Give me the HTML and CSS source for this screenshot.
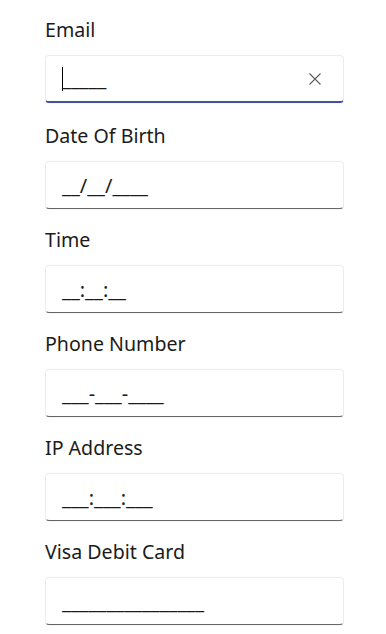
FILE: index.html
```html
<!DOCTYPE html>
<html lang="en">
<head>
  <meta charset="UTF-8">
  <meta name="viewport" content="width=device-width, initial-scale=1.0">
  <title>Masked TextBox</title>
  <link rel="stylesheet" href="styles.css">
</head>
<body>
  <div class="form-section">
    <div class="field first">
      <label>Email</label>
      <div class="mask-box focused">
        <span class="caret"></span><span class="mask">_____</span>
        <span class="clear">
          <svg width="14" height="14" viewBox="0 0 14 14">
            <path d="M1.5 1.5 L12.5 12.5 M12.5 1.5 L1.5 12.5" stroke="#5c5c5c" stroke-width="1.1" fill="none"/>
          </svg>
        </span>
      </div>
    </div>

    <div class="field">
      <label>Date Of Birth</label>
      <div class="mask-box"><span class="mask">__/__/____</span></div>
    </div>

    <div class="field">
      <label>Time</label>
      <div class="mask-box"><span class="mask">__:__:__</span></div>
    </div>

    <div class="field">
      <label>Phone Number</label>
      <div class="mask-box"><span class="mask">___-___-____</span></div>
    </div>

    <div class="field">
      <label>IP Address</label>
      <div class="mask-box"><span class="mask">___:___:___</span></div>
    </div>

    <div class="field">
      <label>Visa Debit Card</label>
      <div class="mask-box"><span class="mask">________________</span></div>
    </div>
  </div>
</body>
</html>
```

FILE: styles.css
```css
* {
  box-sizing: border-box;
}
body {
  margin: 0;
  font-family: 'Noto Sans', 'Open Sans', sans-serif;
  background-color: #fff;
  color: #1b1b1b;
}

.form-section {
  padding: 17px 42px 0 45px;
}

.field {
  margin-bottom: 18px;
}

.field.first {
  margin-bottom: 20px;
}

label {
  display: block;
  font-size: 19.6px;
  line-height: 26px;
  margin-bottom: 12px;
}

.mask-box {
  height: 48px;
  display: flex;
  align-items: center;
  padding: 0 16px;
  background-color: #fff;
  border: 1px solid #ececec;
  border-bottom: 1px solid #666;
  border-radius: 4px;
  box-shadow: 0 1px 1px rgba(0, 0, 0, 0.04);
  font-size: 20px;
}

.mask-box.focused {
  border-bottom: 2px solid #47519b;
}

.caret {
  width: 1px;
  height: 24px;
  background-color: #000;
  margin-right: -1px;
}

.clear {
  margin-left: auto;
  margin-right: 5px;
  display: flex;
  align-items: center;
}
```
